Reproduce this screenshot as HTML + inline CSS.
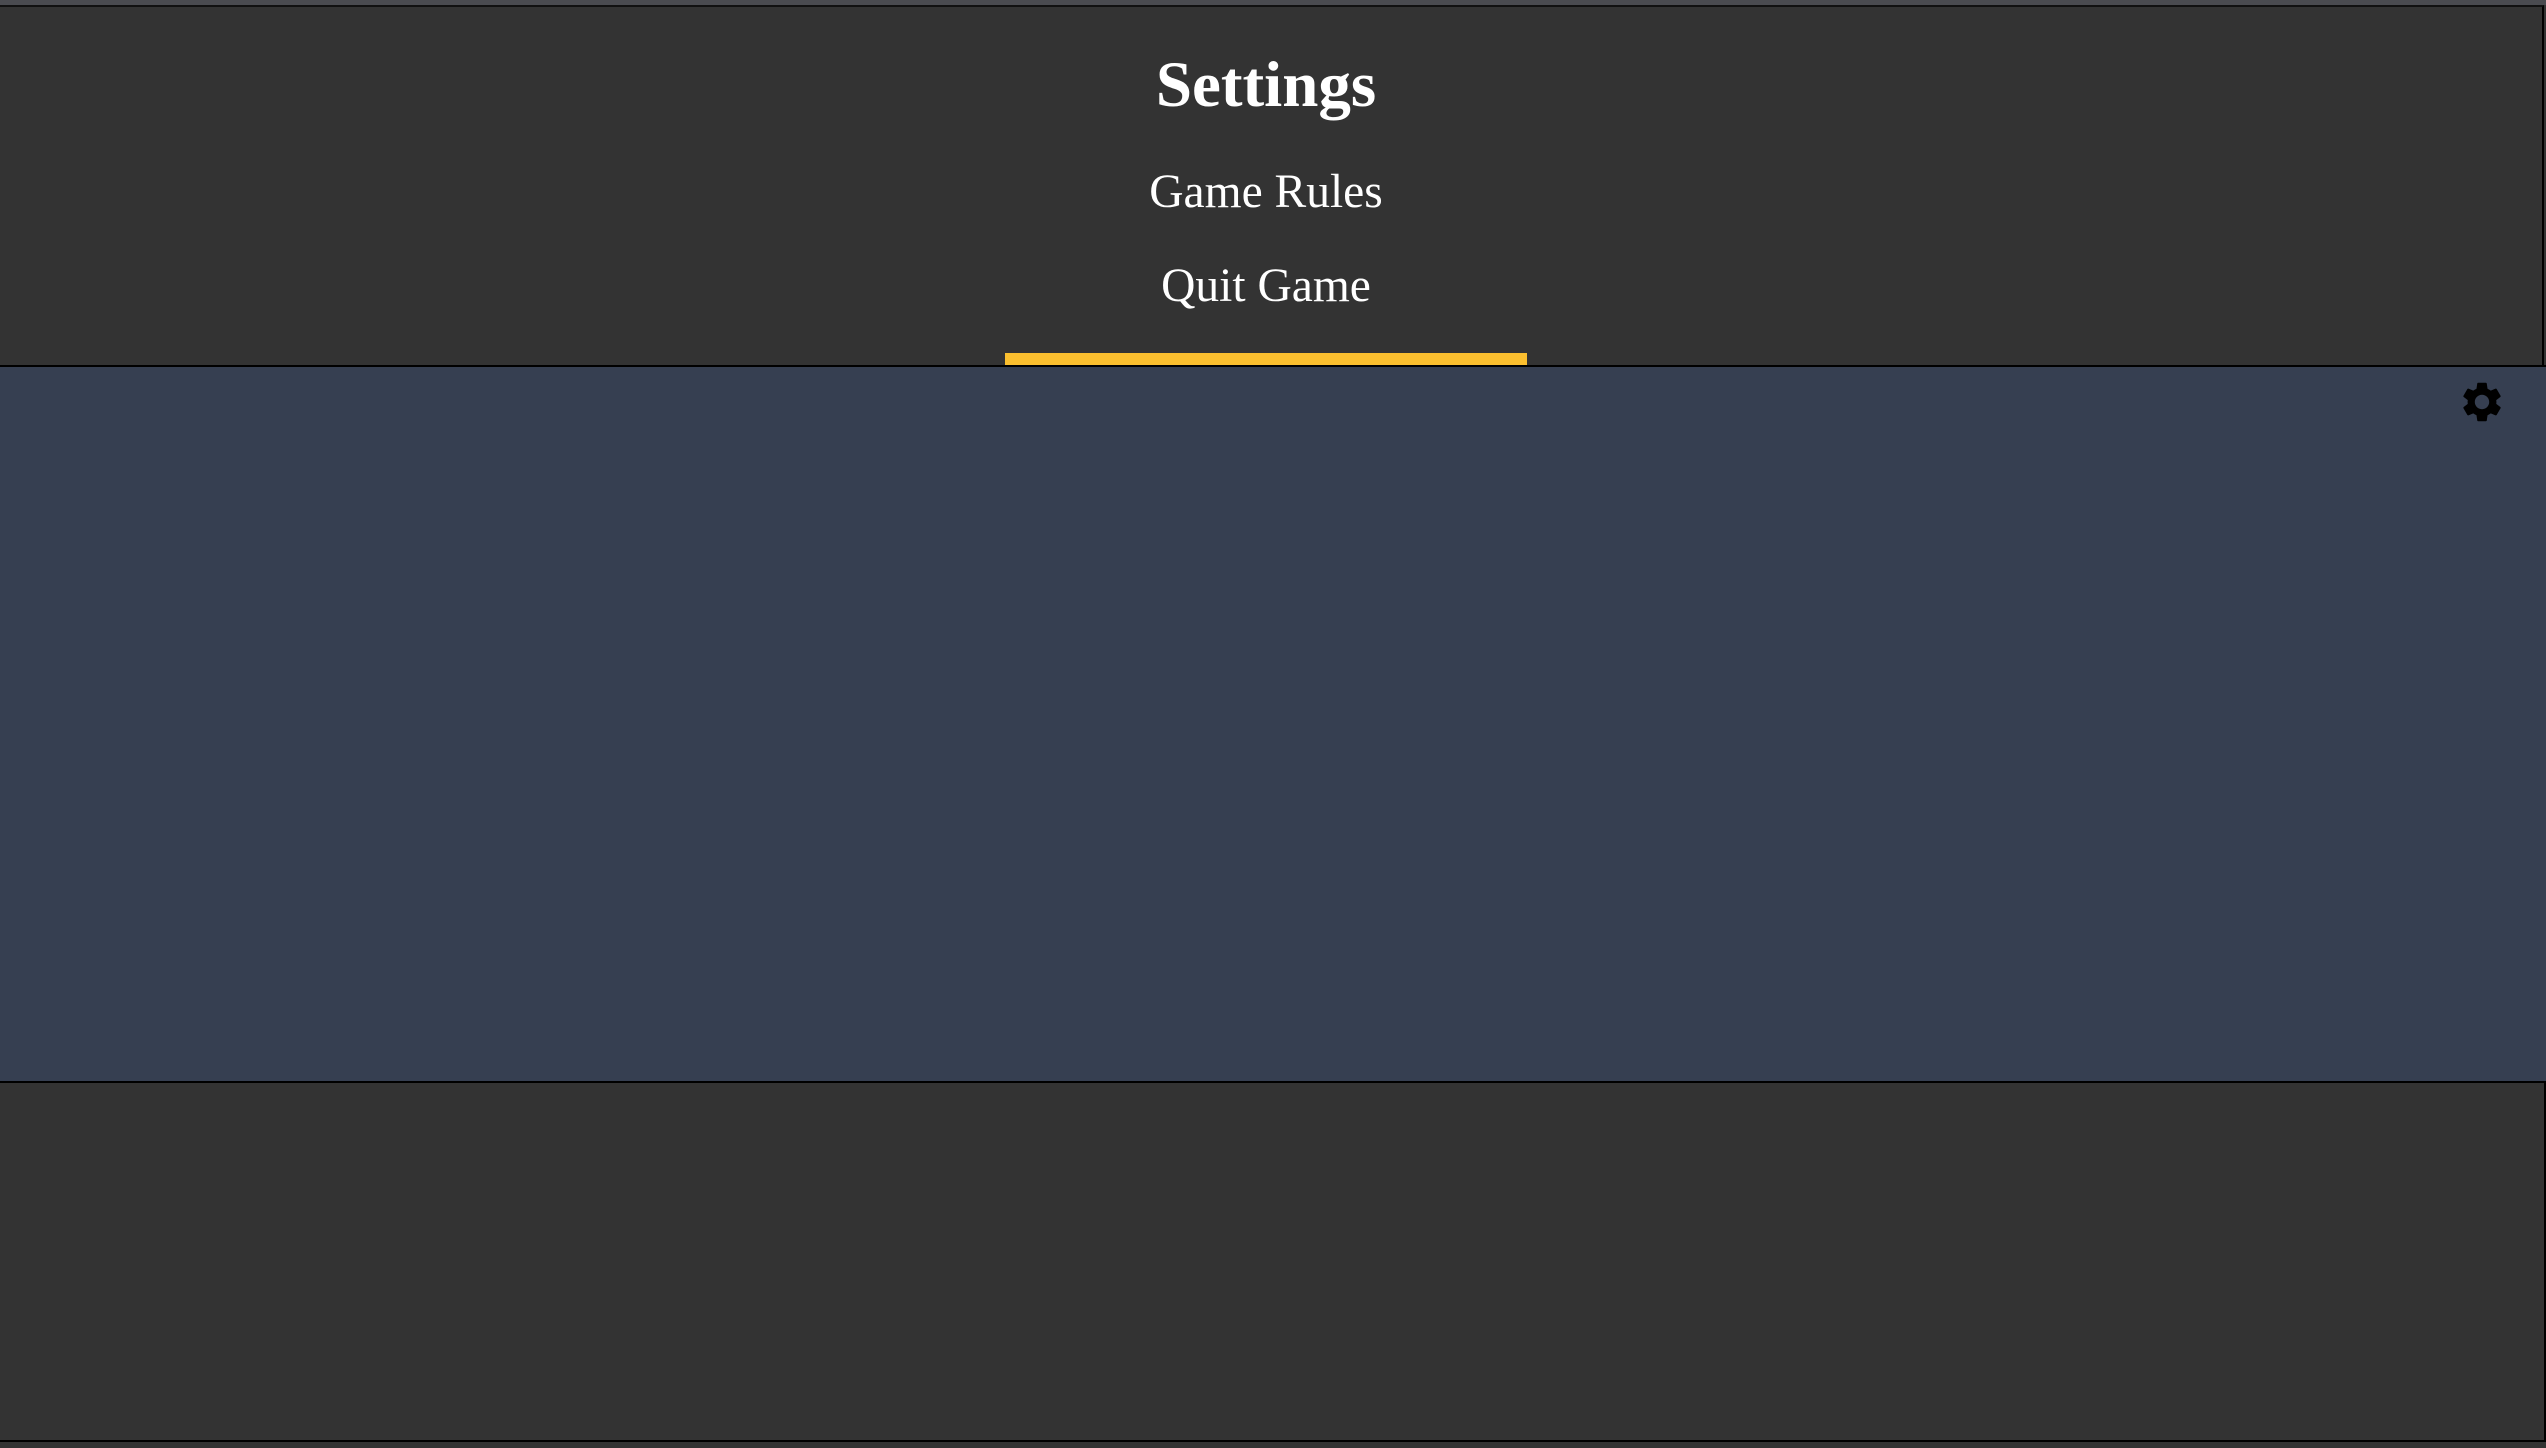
<!DOCTYPE html>
<html><head><meta charset="utf-8"><style>
html,body{margin:0;padding:0;width:2546px;height:1448px;overflow:hidden;background:#333;font-family:"Liberation Serif",serif;}
.strip{position:absolute;left:0;top:0;width:2546px;height:5px;background:#4a4b50;}
.top{position:absolute;left:0;top:5px;width:2544px;height:360px;background:#333;border-top:2px solid #111;border-right:2px solid #000;box-sizing:border-box;}
.line1{position:absolute;left:0;top:365px;width:2546px;height:2px;background:#000;}
.blue{position:absolute;left:0;top:367px;width:2546px;height:714px;background:#363f51;}
.bottom{position:absolute;left:0;top:1081px;width:2546px;height:361px;background:#333;border:2px solid #000;border-left:none;box-sizing:border-box;}
.t{position:absolute;left:1266px;transform:translateX(-50%);color:#fff;white-space:nowrap;line-height:1;}
.yel{position:absolute;left:1005px;top:353px;width:522px;height:12px;background:#fbbf2f;}
</style></head><body>
<div class="strip"></div>
<div class="top"></div>
<div class="t" style="top:53px;font-size:65px;font-weight:bold;">Settings</div>
<div class="t" style="top:169px;font-size:47.5px;">Game Rules</div>
<div class="t" style="top:263px;font-size:47.5px;">Quit Game</div>
<div class="yel"></div>
<div class="line1"></div>
<div class="blue"></div>
<svg style="position:absolute;left:2458px;top:378px" width="48" height="48" viewBox="0 0 24 24"><path fill="#000" d="M19.14 12.94c.04-.3.06-.61.06-.94 0-.32-.02-.64-.07-.94l2.030-1.58a.49.49 0 0 0 .12-.61l-1.920-3.32a.488.488 0 0 0-.59-.22l-2.39.96c-.5-.38-1.03-.7-1.62-.94l-.36-2.54a.484.484 0 0 0-.48-.41h-3.84c-.24 0-.43.17-.47.41l-.36 2.54c-.59.24-1.13.57-1.62.94l-2.39-.96c-.22-.08-.47 0-.59.22L2.74 8.87c-.12.21-.08.47.12.61l2.03 1.58c-.05.3-.08.63-.08.94s.02.64.07.94l-2.03 1.58a.49.49 0 0 0-.12.61l1.92 3.32c.12.22.37.29.59.22l2.39-.96c.5.38 1.03.7 1.62.94l.36 2.54c.05.24.24.41.48.41h3.84c.24 0 .44-.17.47-.41l.36-2.54c.59-.24 1.130-.56 1.62-.94l2.39.96c.22.08.47 0 .59-.22l1.92-3.32c.12-.22.07-.47-.12-.61l-2.01-1.58zM12 15.6c-1.98 0-3.6-1.62-3.6-3.6s1.62-3.6 3.6-3.6 3.6 1.62 3.6 3.6-1.62 3.6-3.6 3.6z"/></svg>
<div class="bottom"></div>
</body></html>
